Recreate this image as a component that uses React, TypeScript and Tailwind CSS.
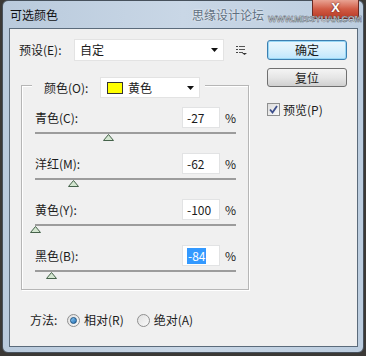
import React from 'react'

const font = { fontFamily: '"Noto Sans CJK SC", "Noto Sans", sans-serif' }

type Row = { label: string; value: number; selected?: boolean }

const rows: Row[] = [
  { label: '青色(C):', value: -27 },
  { label: '洋红(M):', value: -62 },
  { label: '黄色(Y):', value: -100 },
  { label: '黑色(B):', value: -84, selected: true },
]

function Arrow() {
  return (
    <svg width="7" height="4" viewBox="0 0 7 4">
      <path d="M0 0h7L3.5 4z" fill="#111" />
    </svg>
  )
}

function SliderRow({ row }: { row: Row }) {
  return (
    <div className="h-[46px]">
      <div className="flex h-[21px] items-center pl-[13px]">
        <span className="w-[147px] text-[12px] text-[#1b1b1b]">{row.label}</span>
        <div className="flex h-[21px] w-[38px] items-center border border-[#e2e3e4] bg-white pl-[4px] text-[12px] text-[#1b1b1b]">
          {row.selected ? <span className="bg-[#3399ff] px-[1px] leading-[16px] text-white">{row.value}</span> : row.value}
        </div>
        <span className="ml-[5px] text-[12px] text-[#1b1b1b]">%</span>
      </div>
      <div className="relative mt-[4px] ml-[13px] h-[2px] w-[201px] bg-[#9c9c9c]">
        <svg className="absolute top-[2px]" style={{ left: row.value + 100 - 5 }} width="11" height="7" viewBox="0 0 11 7">
          <path d="M5.5 0.5L10.5 6.5H0.5z" fill="#d3e6d0" stroke="#45624a" strokeWidth="1" />
        </svg>
      </div>
    </div>
  )
}

function Radio({ checked }: { checked?: boolean }) {
  return (
    <span className="flex h-[13px] w-[13px] items-center justify-center rounded-full border border-[#8f8f8f] bg-gradient-to-br from-[#e0e0e0] to-[#fafafa]">
      {checked && <span className="h-[7px] w-[7px] rounded-full border border-[#1c5180] bg-gradient-to-br from-[#8ccbf5] to-[#1f6fb4]" />}
    </span>
  )
}

export default function App() {
  return (
    <div className="h-[356px] w-[366px] bg-[#3b3936]" style={font}>
      <div className="relative ml-[2px] h-[353px] w-[362px] rounded-[6px] border border-[#47515c] bg-gradient-to-r from-[#b9cadc] via-[#c9d7e6] to-[#bccddf]">
        {/* title bar */}
        <div className="flex h-[27px] items-start">
          <span className="mt-[5px] ml-[7px] text-[12px] text-[#111]">可选颜色</span>
          <div className="flex-1" />
          <div className="-mt-[1px] mr-[4px] flex h-[19px] w-[47px] items-center justify-center rounded-b-[4px] border border-t-0 border-[#6b2a22] bg-gradient-to-b from-[#e8a293] via-[#d15b45] to-[#b93a24] pb-[3px]">
            <span className="text-[13px] font-bold leading-[12px] text-white" style={{ fontFamily: '"Liberation Sans", sans-serif', textShadow: '0 0 2px #4a1a12' }}>X</span>
          </div>
          {/* watermark */}
          <div className="absolute top-[5px] left-[189px] flex items-start gap-[4px]">
            <span className="text-[12px] leading-[18px] text-[#5f6f80]" style={{ textShadow: '0 0 2px #fff' }}>思缘设计论坛</span>
            <span className="mt-[10px] text-[9px] leading-[7px] font-bold tracking-[-0.3px] text-[#eef2f6]" style={{ fontFamily: '"Liberation Sans", sans-serif', WebkitTextStroke: '0.5px #56616c' }}>WWW.MISSYUAN.COM</span>
          </div>
        </div>

        {/* client */}
        <div className="ml-[6px] flex h-[319px] w-[349px] border border-[#5b6b7b] bg-[#f0f0f0] text-[#1b1b1b]">
          <div className="w-[257px] pt-[10px] pl-[9px]">
            <div className="flex h-[22px] items-center">
              <span className="w-[55px] text-[12px]">预设(E):</span>
              <div className="flex h-[22px] w-[150px] items-center justify-between border border-[#e3e3e3] bg-white pr-[5px] pl-[5px] text-[12px]">
                <span>自定</span>
                <Arrow />
              </div>
              <svg className="ml-[12px]" width="11" height="10" viewBox="0 0 11 10">
                <path d="M0 1.5h2M0 4.5h2M0 7.5h2" stroke="#444" />
                <path d="M3 1.5h6M3 4.5h6M3 7.5h4" stroke="#555" />
                <path d="M6 8h5l-2.5 2z" fill="#333" />
              </svg>
            </div>

            <div className="mt-[24px] ml-[2px] h-[205px] w-[228px] border border-[#b6b6b6] shadow-[inset_1px_1px_0_#fff,1px_1px_0_#fff]">
              <div className="-mt-[9px] ml-[10px] flex h-[21px] w-fit items-center bg-[#f0f0f0] pr-[5px] pl-[12px]">
                <span className="w-[56px] text-[12px]">颜色(O):</span>
                <div className="flex h-[21px] w-[100px] items-center border border-[#e3e3e3] bg-white pr-[5px] pl-[6px] text-[12px]">
                  <span className="h-[12px] w-[16px] border border-[#333] bg-[#ffff00]" />
                  <span className="ml-[5px] flex-1">黄色</span>
                  <Arrow />
                </div>
              </div>
              <div className="mt-[9px]">
                {rows.map((r) => (
                  <SliderRow key={r.label} row={r} />
                ))}
              </div>
            </div>

            <div className="mt-[22px] ml-[11px] flex h-[16px] items-center text-[12px]">
              <span className="w-[37px]">方法:</span>
              <Radio checked />
              <span className="ml-[4px]">相对(R)</span>
              <span className="ml-[13px]">
                <Radio />
              </span>
              <span className="ml-[4px]">绝对(A)</span>
            </div>
          </div>

          <div className="w-[80px] pt-[11px]">
            <button className="flex h-[20px] w-[80px] items-center justify-center rounded-[3px] border border-[#3c7fb1] bg-gradient-to-b from-[#eaf6fd] via-[#d9f0fc] to-[#bee6fd] text-[12px] shadow-[inset_0_0_0_1px_#98d7f5]">
              确定
            </button>
            <button className="mt-[8px] flex h-[19px] w-[80px] items-center justify-center rounded-[3px] border border-[#707070] bg-gradient-to-b from-[#f4f4f4] via-[#e6e6e6] to-[#d0d0d0] text-[12px]">
              复位
            </button>
            <div className="mt-[16px] flex h-[13px] items-center text-[12px]">
              <span className="flex h-[13px] w-[13px] items-center justify-center border border-[#8e8f8f] bg-gradient-to-br from-[#dcdcdc] to-[#fafafa]">
                <svg width="9" height="9" viewBox="0 0 9 9">
                  <path d="M1 4.5l2.5 3L8 1" fill="none" stroke="#3d4f8c" strokeWidth="1.8" />
                </svg>
              </span>
              <span className="ml-[3px]">预览(P)</span>
            </div>
          </div>
        </div>
      </div>
    </div>
  )
}
